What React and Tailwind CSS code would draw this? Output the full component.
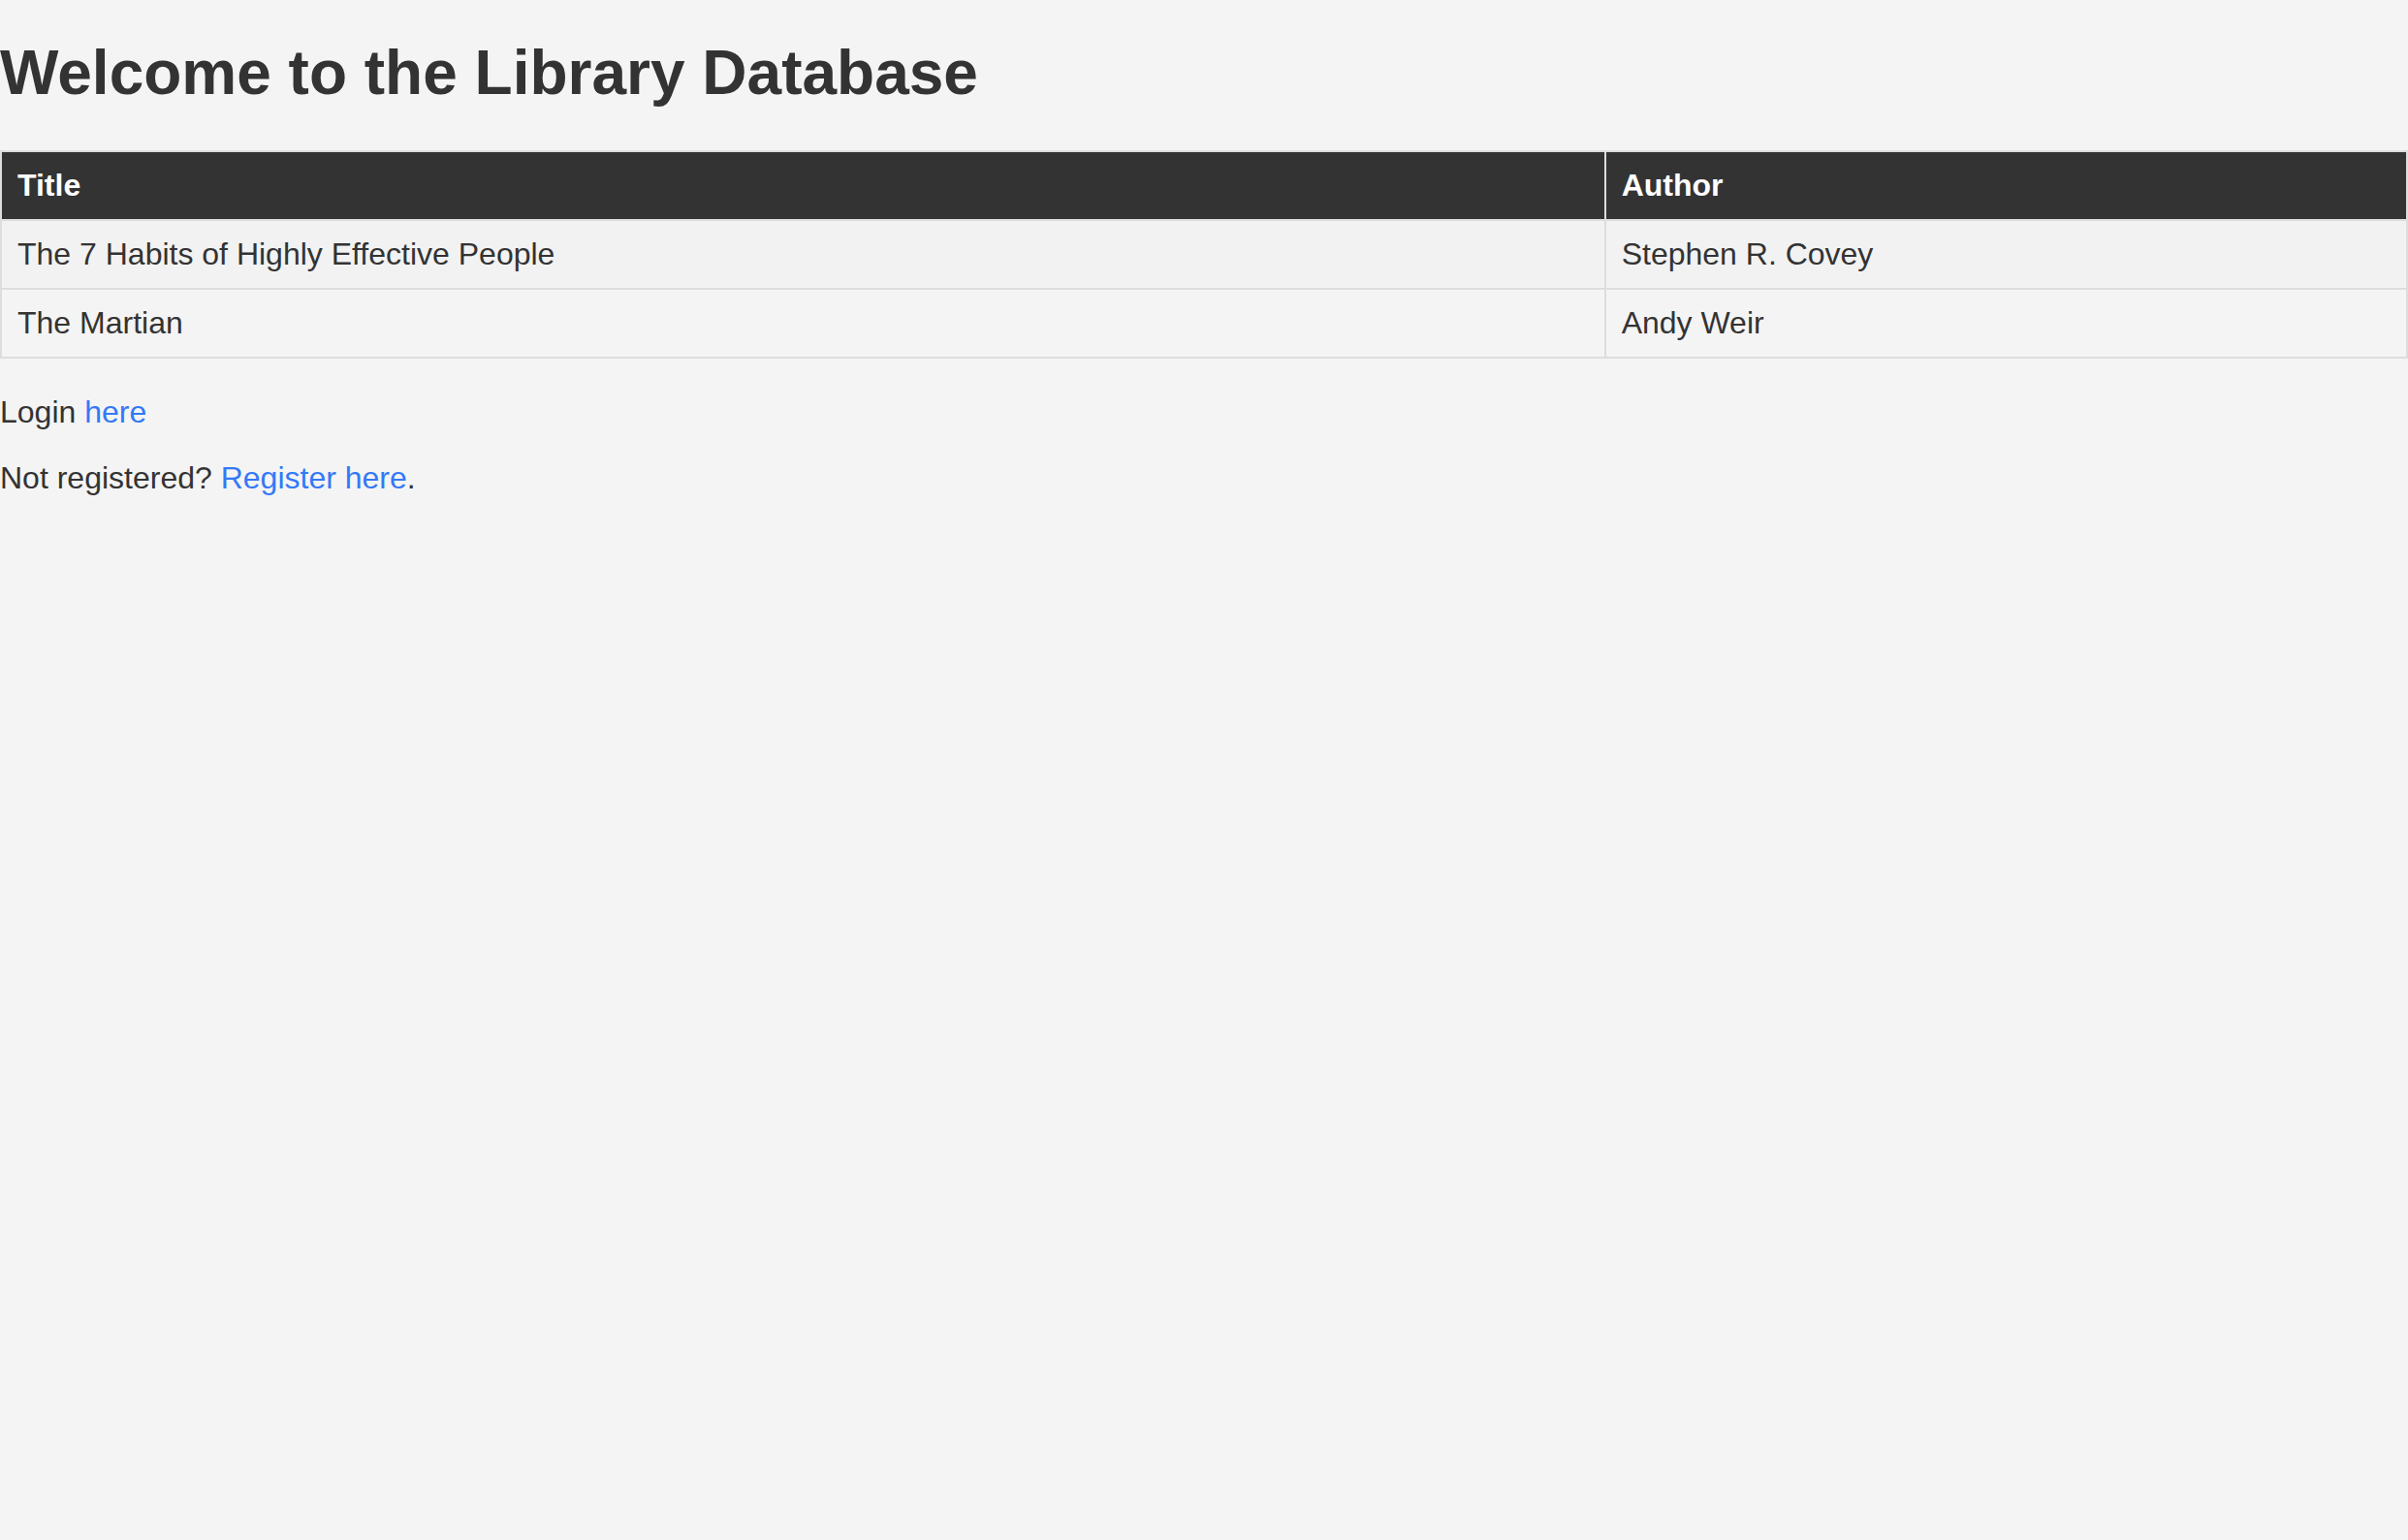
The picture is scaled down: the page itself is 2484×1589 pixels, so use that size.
import React from "react";

const books = [
  { title: "The 7 Habits of Highly Effective People", author: "Stephen R. Covey" },
  { title: "The Martian", author: "Andy Weir" },
];

export default function App() {
  return (
    <div className="min-h-screen bg-[#f4f4f4] text-[#333] font-['Liberation_Sans',Arial,sans-serif] text-[32px] leading-[37px]">
      <h1 className="pt-[38px] mb-[43px] text-[64px] leading-[74px] font-bold">
        Welcome to the Library Database
      </h1>

      <table className="w-full border-collapse">
        <tbody>
          <tr className="bg-[#333] text-white">
            <th className="w-2/3 border-2 border-[#ddd] px-4 py-4 text-left font-bold">Title</th>
            <th className="border-2 border-[#ddd] px-4 py-4 text-left font-bold">Author</th>
          </tr>
          {books.map((book, i) => (
            <tr key={i} className={i % 2 === 0 ? "bg-[#f2f2f2]" : ""}>
              <td className="border-2 border-[#ddd] px-4 py-4">{book.title}</td>
              <td className="border-2 border-[#ddd] px-4 py-4">{book.author}</td>
            </tr>
          ))}
        </tbody>
      </table>

      <p className="mt-[37px]">
        Login <a href="#" className="text-[#3479f5]">here</a>
      </p>
      <p className="mt-[31px]">
        Not registered? <a href="#" className="text-[#3479f5]">Register here</a>.
      </p>
    </div>
  );
}
